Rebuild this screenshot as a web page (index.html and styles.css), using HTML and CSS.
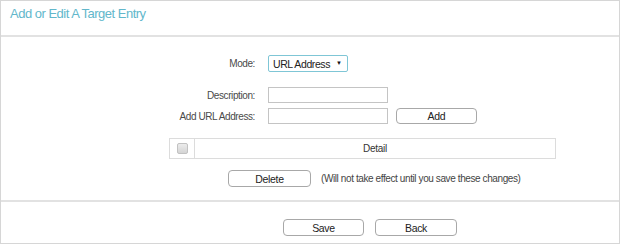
FILE: index.html
```html
<!DOCTYPE html>
<html lang="en">
<head>
  <meta charset="UTF-8" />
  <title>Add or Edit A Target Entry</title>
  <link rel="stylesheet" href="styles.css">
</head>
<body>
  <div class="panel">
    <div class="panel-head">
      <h2 class="titulo">Add or Edit A Target Entry</h2>
    </div>

    <div class="panel-body">
      <div class="fila fila-modo">
        <label class="etiqueta">Mode:</label>
        <span class="select-wrap">
          <select class="selector">
            <option>URL Address</option>
          </select>
        </span>
      </div>

      <div class="fila fila-desc">
        <label class="etiqueta">Description:</label>
        <input class="campo" type="text">
      </div>

      <div class="fila fila-url">
        <label class="etiqueta">Add URL Address:</label>
        <input class="campo" type="text">
        <button class="boton boton-add">Add</button>
      </div>

      <table class="lista">
        <tr>
          <th class="col-check"><span class="check"></span></th>
          <th>Detail</th>
        </tr>
      </table>

      <div class="fila fila-borrar">
        <button class="boton boton-borrar">Delete</button>
        <span class="nota">(Will not take effect until you save these changes)</span>
      </div>
    </div>

    <div class="panel-foot">
      <button class="boton boton-guardar">Save</button>
      <button class="boton boton-volver">Back</button>
    </div>
  </div>
</body>
</html>
```

FILE: styles.css
```css
body {
  font-family: "Liberation Sans", Arial, sans-serif;
  background: #ffffff;
  color: #444;
  margin: 0;
  padding: 0;
}

.panel {
  width: 618px;
  border: 1px solid #d6d6d6;
}

.panel-head {
  height: 34px;
  border-bottom: 2px solid #e2e2e2;
}

.titulo {
  margin: 0;
  padding: 5px 0 0 9px;
  font-size: 13px;
  letter-spacing: -0.5px;
  font-weight: normal;
  line-height: 16px;
  color: #62b7cb;
}

.panel-body {
  padding: 18px 0 13px;
}

.fila {
  display: flex;
  align-items: center;
}

.etiqueta {
  width: 254px;
  margin-right: 13px;
  text-align: right;
  font-size: 10px;
  letter-spacing: -0.4px;
  color: #4a4a4a;
}

.fila-modo { height: 17px; }
.fila-desc { height: 16px; margin-top: 15px; }
.fila-url { height: 16px; margin-top: 5px; }

.select-wrap {
  position: relative;
  display: inline-block;
  height: 17px;
}

.selector {
  appearance: none;
  -webkit-appearance: none;
  display: block;
  width: 80px;
  height: 17px;
  margin: 0;
  padding: 0 0 0 4px;
  border: 1px solid #7fc6d6;
  border-radius: 2px;
  background: #fff;
  font-family: inherit;
  font-size: 10.5px;
  letter-spacing: -0.4px;
  color: #222;
}

.select-wrap::after {
  content: "▼";
  position: absolute;
  right: 6px;
  top: 5px;
  font-size: 6px;
  line-height: 7px;
  color: #111;
  pointer-events: none;
}

.campo {
  width: 120px;
  height: 16px;
  margin: 0;
  padding: 0 3px;
  border: 1px solid #c4c4c4;
  box-sizing: border-box;
}

.boton {
  height: 17px;
  margin: 0;
  padding: 0;
  border: 1px solid #a8a8a8;
  border-radius: 4px;
  background: #fff;
  font-family: inherit;
  font-size: 10.5px;
  letter-spacing: -0.3px;
  color: #222;
  box-sizing: border-box;
  cursor: pointer;
}

.boton-add {
  width: 81px;
  height: 16px;
  margin-left: 8px;
}

.lista {
  margin: 14px 0 0 168px;
  width: 387px;
  height: 21px;
  border-collapse: collapse;
}

.lista th {
  border: 1px solid #dcdcdc;
  font-weight: normal;
  font-size: 10px;
  letter-spacing: -0.3px;
  color: #333;
  padding: 0;
}

.lista .col-check {
  width: 24px;
}

.check {
  display: block;
  width: 9px;
  height: 9px;
  margin: 0 auto;
  border: 1px solid #c2c2c2;
  border-radius: 2px;
  background: linear-gradient(#ececec, #d4d4d4);
}

.fila-borrar {
  height: 17px;
  margin-top: 11px;
}

.boton-borrar {
  width: 83px;
  margin-left: 227px;
}

.nota {
  margin-left: 10px;
  font-size: 10px;
  letter-spacing: -0.4px;
  color: #444;
}

.panel-foot {
  border-top: 2px solid #e2e2e2;
  padding: 17px 0 7px 282px;
  display: flex;
  gap: 11px;
}

.boton-guardar { width: 81px; }
.boton-volver { width: 82px; }
```
